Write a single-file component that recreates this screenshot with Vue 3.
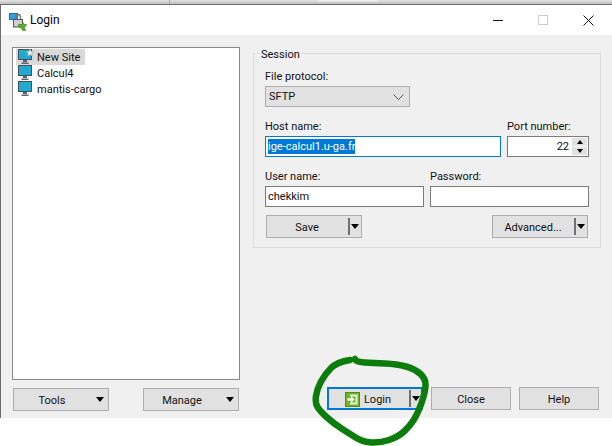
<script setup>
const sites = [
  { name: 'New Site', star: true },
  { name: 'Calcul4' },
  { name: 'mantis-cargo' },
]

const pts = [
  [350, 360], [337, 362], [325, 374], [317, 389], [315, 403], [320, 411], [333, 423],
  [350, 434], [363, 442], [380, 443], [398, 437], [410, 426], [418, 413], [425, 393],
  [426, 379], [415, 369], [397, 364], [373, 363], [357, 362], [355, 359],
]
const scribble = pts.reduce((d, p, i) => {
  if (i === 0) return `M${p[0]} ${p[1]}`
  if (i === pts.length - 1) return `${d} L${p[0]} ${p[1]}`
  const n = pts[i + 1]
  return `${d} Q${p[0]} ${p[1]} ${(p[0] + n[0]) / 2} ${(p[1] + n[1]) / 2}`
}, '')
</script>

<template>
  <div class="page">
    <div class="strip"></div>
    <div class="window">
      <header class="titlebar">
        <svg class="appicon" width="18" height="18" viewBox="0 0 18 18">
          <rect x="0.500" y="0.500" width="8" height="6" fill="#2f9fe0" stroke="#1c6fa8" />
          <path d="M6.500 6V4a2.500 2.500 0 0 1 5 0v3" fill="none" stroke="#777" stroke-width="1.400" />
          <rect x="4.500" y="6.500" width="9" height="7.500" fill="#cfcfcf" stroke="#555" />
          <path d="M9.500 11.500h3.500l1-2 1 2h2.500v.5l-2 2.500 1 3h-3l-1-2-3-2z" fill="#5cae2a" stroke="#3e7d12" stroke-width="0.600" />
        </svg>
        <span class="title">Login</span>
        <div class="winctl">
          <svg width="10" height="10" viewBox="0 0 10 10"><path d="M0 5.500h10" stroke="#111" /></svg>
          <svg width="10" height="10" viewBox="0 0 10 10"><rect x="0.500" y="0.500" width="9" height="9" fill="none" stroke="#ccc" /></svg>
          <svg width="11" height="11" viewBox="0 0 11 11"><path d="M0.500 0.500l10 10M10.500 0.500l-10 10" stroke="#111" /></svg>
        </div>
      </header>

      <div class="body">
        <div class="main">
          <aside class="left">
            <ul class="tree">
              <li v-for="s in sites" :key="s.name" class="node" :class="{ sel: s.star }">
                <svg width="16" height="16" viewBox="0 0 16 16">
                  <rect x="0.500" y="0.500" width="13" height="10" fill="#21a9cf" stroke="#45505a" />
                  <path d="M5 11h4v2H5zM3.500 13.500h7v1.500h-7z" fill="#59636b" />
                  <path v-if="s.star" d="M12 0l1.100 2.400 2.600.3-1.900 1.800.5 2.600-2.300-1.300-2.300 1.300.5-2.600-1.900-1.800 2.600-.3z" fill="#eef0f3" stroke="#9aa3ab" stroke-width="0.600" />
                </svg>
                <span>{{ s.name }}</span>
              </li>
            </ul>
            <div class="leftbtns">
              <button class="btn wide arrowed"><span>Tools</span><i class="caret"></i></button>
              <button class="btn wide arrowed"><span>Manage</span><i class="caret"></i></button>
            </div>
          </aside>

          <section class="right">
            <fieldset class="session">
              <legend>Session</legend>
              <label class="lab">File protocol:</label>
              <div class="select">
                <span>SFTP</span>
                <svg width="11" height="6" viewBox="0 0 11 6"><path d="M0.500 0.500l5 5 5-5" fill="none" stroke="#555" /></svg>
              </div>

              <div class="row hostrow">
                <div class="col host">
                  <label class="lab">Host name:</label>
                  <div class="input focus"><span class="hl">ige-calcul1.u-ga.fr</span></div>
                </div>
                <div class="col port">
                  <label class="lab">Port number:</label>
                  <div class="input portbox">
                    <span>22</span>
                    <div class="spin">
                      <b><i class="up"></i></b>
                      <b><i class="down"></i></b>
                    </div>
                  </div>
                </div>
              </div>

              <div class="row userrow">
                <div class="col half">
                  <label class="lab">User name:</label>
                  <div class="input">chekkim</div>
                </div>
                <div class="col half">
                  <label class="lab">Password:</label>
                  <div class="input"></div>
                </div>
              </div>

              <div class="row actions">
                <button class="btn wide split"><span>Save</span><em></em><i class="caret"></i></button>
                <button class="btn wide split"><span>Advanced...</span><em></em><i class="caret"></i></button>
              </div>
            </fieldset>

            <div class="footer">
              <button class="btn wide split primary">
                <span class="loginlabel">
                  <svg width="15" height="15" viewBox="0 0 15 15">
                    <rect x="0.500" y="0.500" width="14" height="14" fill="#6fb52c" stroke="#4f8f17" />
                    <path d="M5 2.500h7.500v10H5v-2h5.500v-6H5z" fill="#e9f5d8" />
                    <path d="M2.500 6.200h3.500V4l3.500 3.500L6 11V8.800H2.500z" fill="#fff" />
                  </svg>
                  Login
                </span>
                <em></em><i class="caret"></i>
              </button>
              <button class="btn plain">Close</button>
              <button class="btn plain">Help</button>
            </div>
          </section>
        </div>
      </div>
    </div>

    <svg class="scribble" width="612" height="446" viewBox="0 0 612 446">
      <path :d="scribble" fill="none" stroke="#0c7d0c" stroke-width="6.500" stroke-linecap="round" stroke-linejoin="round" />
    </svg>
  </div>
</template>

<style>
html, body { margin: 0; background: #fff; }
</style>

<style scoped>
.page {
  position: relative;
  width: 612px;
  height: 446px;
  overflow: hidden;
  box-sizing: border-box;
  background: #fff;
  font: 11px Roboto, "Open Sans", sans-serif;
  color: #111;
}
.strip {
  height: 4px;
  background:
    linear-gradient(#a8a8a8, #a8a8a8) 169px 0 / 1px 3px no-repeat,
    linear-gradient(#f2f2f2, #e2e2e2) 318px 0 / 60px 2px no-repeat,
    linear-gradient(#e4e4e4, #bdbdbd);
}
.window {
  height: 414px;
  box-sizing: border-box;
  border-top: 1px solid #6d6d6d;
  border-left: 1px solid #6d6d6d;
  display: flex;
  flex-direction: column;
}
.titlebar {
  height: 30px;
  flex: none;
  display: flex;
  align-items: center;
  padding-left: 8px;
  background: #fff;
}
.appicon { margin-right: 3px; margin-top: 3px; }
.title { font-size: 12px; color: #000; }
.winctl {
  margin-left: auto;
  display: flex;
  align-items: center;
  gap: 35px;
  padding-right: 18px;
}
.body {
  flex: 1;
  background: #f0f0f0;
  padding: 12px 0 0 11px;
  min-height: 0;
}
.main { display: flex; gap: 13px; }
.left { width: 228px; flex: none; }
.tree {
  list-style: none;
  margin: 0;
  padding: 1px 0 0 3px;
  height: 333px;
  box-sizing: border-box;
  background: #fff;
  border: 1px solid #828790;
}
.node {
  display: flex;
  align-items: center;
  width: fit-content;
  height: 16px;
  gap: 3px;
  padding: 0 1px 0 2px;
}
.node span { padding-right: 4px; }
.sel { background: #d9d9d9; }
.leftbtns {
  display: flex;
  justify-content: space-between;
  margin: 8px 1px 0 1px;
}
.btn {
  box-sizing: border-box;
  height: 23px;
  padding: 2px 0 0;
  font: inherit;
  color: #111;
  background: #e1e1e1;
  border: 1px solid #adadad;
  display: flex;
  align-items: center;
  justify-content: center;
  position: relative;
}
.wide { width: 96px; }
.plain { width: 80px; }
.caret {
  width: 0;
  height: 0;
  border-left: 4.500px solid transparent;
  border-right: 4.500px solid transparent;
  border-top: 5px solid #000;
  position: absolute;
  right: 2px;
  top: 8px;
}
.arrowed .caret { right: 4px; }
.arrowed > span { margin-right: 18px; }
.split > span { margin-right: 14px; }
.split em {
  position: absolute;
  right: 11px;
  top: 2px;
  bottom: 2px;
  width: 2px;
  background: #6f6f6f;
}
.primary .caret { right: 1px; top: 7px; }
.primary em { right: 10px; top: 1px; bottom: 1px; }
.right { width: 347px; flex: none; }
.session {
  margin: -2px 0 0;
  padding: 7px 11px 0 11px;
  height: 203px;
  box-sizing: border-box;
  border: 1px solid #dcdcdc;
  position: relative;
}
legend { padding: 4px 1px 0; margin-left: -5px; line-height: 12px; }
.lab { display: block; height: 16px; line-height: 18px; }
.select {
  margin-top: 2px;
  width: 145px;
  height: 21px;
  box-sizing: border-box;
  background: #e1e1e1;
  border: 1px solid #adadad;
  display: flex;
  align-items: center;
  justify-content: space-between;
  padding: 0 3px 0 3px;
}
.select svg { margin-right: 2px; }
.row { display: flex; }
.hostrow { margin-top: 11px; gap: 6px; }
.userrow { margin-top: 11px; gap: 6px; }
.col .input { margin-top: 2px; }
.host { width: 236px; }
.port { width: 82px; }
.half { width: 159px; }
.input {
  height: 21px;
  box-sizing: border-box;
  background: #fff;
  border: 1px solid #7a7a7a;
  display: flex;
  align-items: center;
  padding: 0 2px;
}
.focus { border-color: #0078d7; }
.hl { background: #0078d7; color: #fff; height: 15px; line-height: 15px; }
.portbox { justify-content: flex-end; padding-right: 1px; gap: 3px; }
.spin { display: flex; flex-direction: column; gap: 1px; }
.spin b {
  width: 15px;
  height: 8px;
  background: #e1e1e1;
  display: flex;
  align-items: center;
  justify-content: center;
}
.up, .down {
  width: 0;
  height: 0;
  border-left: 3.500px solid transparent;
  border-right: 3.500px solid transparent;
}
.up { border-bottom: 4px solid #000; }
.down { border-top: 4px solid #000; }
.actions { margin: 8px 0 0 1px; width: 322px; justify-content: space-between; }
.footer {
  display: flex;
  gap: 8px;
  margin: 139px 0 0 74px;
}
.primary { border: 2px solid #0078d7; }
.loginlabel { display: flex; align-items: center; gap: 4px; }
.scribble { position: absolute; left: 0; top: 0; pointer-events: none; }
</style>
